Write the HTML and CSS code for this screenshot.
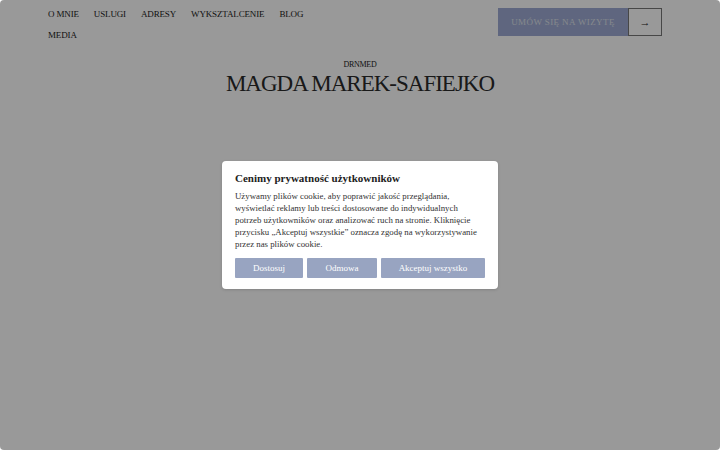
FILE: index.html
```html
<!DOCTYPE html>
<html lang="pl">
<head>
<meta charset="utf-8">
<title>Magda Marek-Safiejko</title>
<link rel="stylesheet" href="styles.css">
</head>
<body>
<div class="page">
  <header class="header">
    <nav class="nav">
      <a href="#">O MNIE</a>
      <a href="#">USLUGI</a>
      <a href="#">ADRESY</a>
      <a href="#">WYKSZTALCENIE</a>
      <a href="#">BLOG</a>
      <a href="#">MEDIA</a>
    </nav>
    <div class="cta">
      <a class="cta-main" href="#">UMÓW SIĘ NA WIZYTĘ</a>
      <a class="cta-arrow" href="#">→</a>
    </div>
  </header>
  <div class="brand">
    <div class="brand-sub">DRNMED</div>
    <div class="brand-name">MAGDA MAREK-SAFIEJKO</div>
  </div>
</div>
<div class="overlay">
  <div class="modal">
    <h2 class="modal-title">Cenimy prywatność użytkowników</h2>
    <p class="modal-text">Używamy plików cookie, aby poprawić jakość przeglądania, wyświetlać reklamy lub treści dostosowane do indywidualnych potrzeb użytkowników oraz analizować ruch na stronie. Kliknięcie przycisku „Akceptuj wszystkie” oznacza zgodę na wykorzystywanie przez nas plików cookie.</p>
    <div class="modal-buttons">
      <button class="btn btn-a">Dostosuj</button>
      <button class="btn btn-b">Odmowa</button>
      <button class="btn btn-c">Akceptuj wszystko</button>
    </div>
  </div>
</div>
</body>
</html>
```
FILE: styles.css
```css
html, body {
  margin: 0;
  padding: 0;
  background: #ffffff;
  width: 720px;
  height: 450px;
  overflow: hidden;
}
body {
  position: relative;
  font-family: "Liberation Serif", "Times New Roman", serif;
  color: #222;
}
.page {
  padding: 0 58px 0 48px;
}
.header {
  display: flex;
  justify-content: space-between;
  align-items: flex-start;
  padding-top: 7px;
}
.nav {
  display: flex;
  flex-wrap: wrap;
  width: 270px;
  column-gap: 15px;
  row-gap: 7px;
}
.nav a {
  font-size: 9px;
  line-height: 14px;
  color: #222;
  text-decoration: none;
  letter-spacing: -0.15px;
}
.cta {
  display: flex;
  height: 28px;
  margin-top: 1px;
}
.cta-main {
  width: 130px;
  background: #9eabd4;
  color: #dfe2ea;
  font-size: 9px;
  letter-spacing: 0.4px;
  text-decoration: none;
  display: flex;
  align-items: center;
  justify-content: center;
}
.cta-arrow {
  width: 32px;
  border: 1px solid #777;
  color: #222;
  display: flex;
  align-items: center;
  justify-content: center;
  text-decoration: none;
  font-size: 11px;
}
.brand {
  text-align: center;
  margin-top: 18px;
  margin-left: 10px;
}
.brand-sub {
  font-size: 8px;
  line-height: 10px;
  letter-spacing: -0.3px;
}
.brand-name {
  font-size: 23px;
  line-height: 28px;
  font-weight: 300;
  letter-spacing: -1px;
  color: #2a2a2a;
}
.overlay {
  position: absolute;
  inset: 0;
  background: rgba(0, 0, 0, 0.4);
  border-radius: 4px;
  display: flex;
  justify-content: center;
  align-items: flex-start;
}
.modal {
  margin-top: 161px;
  width: 250px;
  background: #fff;
  border-radius: 4px;
  padding: 9px 13px 11px 13px;
  box-shadow: 0 1px 3px rgba(0,0,0,0.15);
}
.modal-title {
  margin: 0;
  font-size: 11px;
  line-height: 16px;
  font-weight: bold;
  color: #222;
}
.modal-text {
  margin: 4px 0 0 0;
  font-size: 8.8px;
  line-height: 12px;
  color: #333;
}
.modal-buttons {
  display: flex;
  gap: 4px;
  margin-top: 8px;
}
.btn {
  height: 20px;
  border: none;
  border-radius: 1px;
  background: #98a4c1;
  color: #fff;
  font-family: "Liberation Serif", "Times New Roman", serif;
  font-size: 9px;
  padding: 0;
}
.btn-a { width: 68px; }
.btn-b { width: 70px; }
.btn-c { width: 104px; }
```
